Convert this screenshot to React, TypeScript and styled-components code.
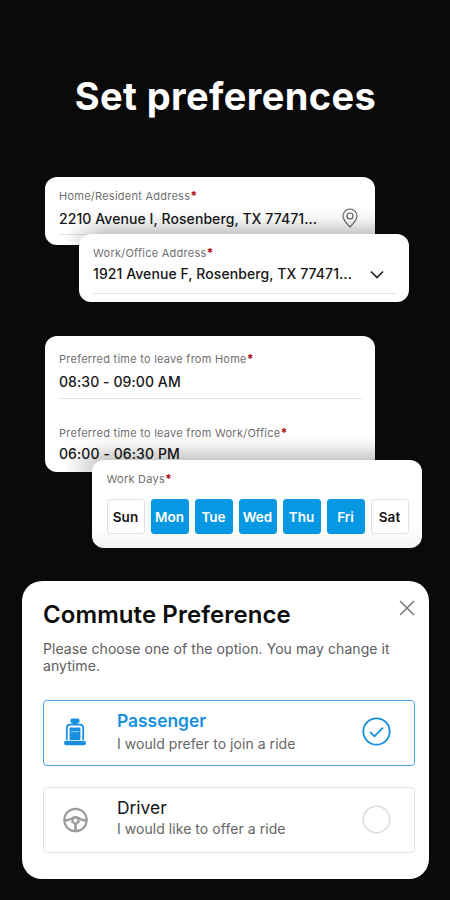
import React from 'react';
import styled, { createGlobalStyle } from 'styled-components';

const GlobalStyle = createGlobalStyle`
  *, *::before, *::after { box-sizing: border-box; }
  body {
    margin: 0;
    background: #0a0a0a;
    font-family: Inter, "Liberation Sans", sans-serif;
  }
`;

const Page = styled.main`
  width: 450px;
  height: 900px;
  overflow: hidden;
  display: flex;
  flex-direction: column;
  align-items: flex-start;
  background: #0a0a0a;
`;

const Heading = styled.h1`
  margin: 71px 0 0;
  width: 100%;
  padding-left: 1px;
  text-align: center;
  color: #fff;
  font-size: 38px;
  font-weight: 700;
  line-height: 50px;
  letter-spacing: 0.4px;
  white-space: nowrap;
`;

const Card = styled.section<{ $left: number; $top: number; $height: number }>`
  position: relative;
  flex: none;
  width: 330px;
  height: ${(p) => p.$height}px;
  margin: ${(p) => p.$top}px 0 0 ${(p) => p.$left}px;
  border-radius: 12px;
  background: #fff;
  overflow: hidden;
`;

const Stack = styled.div<{ $top: number }>`
  margin-top: ${(p) => p.$top}px;
  display: flex;
  flex-direction: column;
  align-items: flex-start;
`;

const Shade = styled.div<{ $height: number }>`
  position: absolute;
  left: 20px;
  right: 0;
  bottom: 0;
  height: ${(p) => p.$height}px;
  background: linear-gradient(rgba(0, 0, 0, 0), rgba(0, 0, 0, 0.05) 30%, rgba(0, 0, 0, 0.22) 70%);
  mask-image: linear-gradient(90deg, transparent, #000 40px);
`;

const Field = styled.div<{ $top: number; $gap: number; $line: number }>`
  margin: 0 13px 0 14px;
  padding-top: ${(p) => p.$top}px;
  padding-bottom: ${(p) => p.$line}px;
  border-bottom: 1px solid #e4e4e4;
  display: flex;
  flex-direction: column;
  gap: ${(p) => p.$gap}px;
`;

const Label = styled.span`
  color: #6f6f6f;
  font-size: 11px;
  line-height: 14px;
  letter-spacing: 0.25px;
  white-space: nowrap;

  &::after {
    content: '*';
    color: #b3161c;
    font-size: 12px;
    line-height: 1;
    font-weight: 800;
  }
`;

const ValueRow = styled.div`
  display: flex;
  align-items: center;
  justify-content: space-between;
  height: 20px;
`;

const Value = styled.span`
  color: #161616;
  font-size: 14px;
  font-weight: 500;
  line-height: 20px;
  letter-spacing: 0.08px;
  white-space: nowrap;
`;

const PinIcon = styled.svg`
  width: 16px;
  height: 20px;
  margin: -2px 4px 0 0;
`;

const ChevronIcon = styled.svg`
  width: 14px;
  height: 9px;
  margin-right: 12px;
`;

const DaysBody = styled.div`
  padding: 12px 13px 0 14.5px;
  height: 100%;
  background: linear-gradient(#fff 75%, #f3f3f3);
  display: flex;
  flex-direction: column;
`;

const Days = styled.div`
  display: flex;
  gap: 6px;
  margin-top: 13px;
`;

const Day = styled.button<{ $on?: boolean }>`
  flex: none;
  width: 38px;
  height: 35px;
  padding: 1px 0 0;
  border: 1px solid ${(p) => (p.$on ? '#0798e4' : '#e0e1ea')};
  border-radius: 3px;
  background: ${(p) => (p.$on ? '#0798e4' : '#fff')};
  color: ${(p) => (p.$on ? '#fff' : '#161616')};
  font: 600 13.5px/32px Inter, sans-serif;
`;

const Sheet = styled.section`
  flex: none;
  width: 407px;
  height: 298px;
  margin: 32.5px 0 0 22px;
  padding: 20px 14px 0 21px;
  border-radius: 20px;
  background: #fff;
`;

const SheetHead = styled.header`
  display: flex;
  justify-content: space-between;
  align-items: flex-start;
`;

const SheetTitle = styled.h2`
  margin: 0;
  color: #0d0d0d;
  font-size: 24px;
  font-weight: 600;
  line-height: 28px;
  letter-spacing: 0.08px;
  white-space: nowrap;
`;

const CloseIcon = styled.svg`
  width: 16px;
  height: 16px;
  margin-top: -1px;
`;

const Description = styled.p`
  margin: 11.5px 0 0;
  color: #5d5d5d;
  font-size: 14px;
  line-height: 17px;
  letter-spacing: 0.07px;
  white-space: nowrap;
`;

const Option = styled.div<{ $on?: boolean; $top: number }>`
  display: flex;
  align-items: center;
  width: 372px;
  height: 66px;
  margin-top: ${(p) => p.$top}px;
  padding: 0 23px ${(p) => (p.$on ? 3 : 0)}px 18px;
  border: 1px solid ${(p) => (p.$on ? '#4ba3e4' : '#e3e3e3')};
  border-radius: 4px;
`;

const OptionIcon = styled.svg`
  flex: none;
  width: 26px;
  height: 28px;
`;

const OptionText = styled.div<{ $on?: boolean }>`
  flex: 1;
  margin-left: 29px;
  padding: ${(p) => (p.$on ? '1px 0 0' : '0 0 2px')};
  display: flex;
  flex-direction: column;
  gap: ${(p) => (p.$on ? 3 : 1)}px;
`;

const OptionTitle = styled.span<{ $on?: boolean }>`
  color: ${(p) => (p.$on ? '#168fdf' : '#161616')};
  font-size: 17.4px;
  font-weight: ${(p) => (p.$on ? 600 : 400)};
  line-height: 20px;
`;

const OptionNote = styled.span`
  color: #666;
  font-size: 14px;
  line-height: 20px;
  letter-spacing: 0.05px;
  white-space: nowrap;
`;

const Radio = styled.svg`
  flex: none;
  width: 29px;
  height: 29px;
`;

const week = ['Sun', 'Mon', 'Tue', 'Wed', 'Thu', 'Fri', 'Sat'];

export default function App() {
  return (
    <>
      <GlobalStyle />
      <Page>
        <Heading>Set preferences</Heading>

        <Stack $top={56}>
          <Card $left={45} $top={0} $height={68}>
            <Shade $height={36} />
            <Field $top={12} $gap={6} $line={5}>
              <Label>Home/Resident Address</Label>
              <ValueRow>
                <Value>2210 Avenue I, Rosenberg, TX 77471...</Value>
                <PinIcon viewBox="0 0 16 20" fill="none" stroke="#5a5a5a" strokeWidth="1.1">
                  <path d="M8 19C5.5 16.3 1 12.2 1 8a7 7 0 0 1 14 0c0 4.2-4.5 8.3-7 11z" />
                  <circle cx="8" cy="8" r="3" />
                </PinIcon>
              </ValueRow>
            </Field>
          </Card>
          <Card $left={79} $top={-11} $height={68}>
            <Field $top={12} $gap={4} $line={9}>
              <Label>Work/Office Address</Label>
              <ValueRow>
                <Value>1921 Avenue F, Rosenberg, TX 77471...</Value>
                <ChevronIcon viewBox="0 0 14 9" fill="none" stroke="#222" strokeWidth="1.7">
                  <path d="M1 1.5l6 6 6-6" />
                </ChevronIcon>
              </ValueRow>
            </Field>
          </Card>
        </Stack>

        <Stack $top={34}>
          <Card $left={45} $top={0} $height={136}>
            <Shade $height={38} />
            <Field $top={16} $gap={6} $line={6}>
              <Label>Preferred time to leave from Home</Label>
              <Value>08:30 - 09:00 AM</Value>
            </Field>
            <Field $top={27} $gap={4} $line={9}>
              <Label>Preferred time to leave from Work/Office</Label>
              <Value>06:00 - 06:30 PM</Value>
            </Field>
          </Card>
          <Card $left={92} $top={-12} $height={88}>
            <DaysBody>
              <Label>Work Days</Label>
              <Days>
                {week.map((d, i) => (
                  <Day key={d} $on={i > 0 && i < 6}>
                    {d}
                  </Day>
                ))}
              </Days>
            </DaysBody>
          </Card>
        </Stack>

        <Sheet>
          <SheetHead>
            <SheetTitle>Commute Preference</SheetTitle>
            <CloseIcon viewBox="0 0 16 16" fill="none" stroke="#777" strokeWidth="1.5">
              <path d="M1 1l14 14M15 1L1 15" />
            </CloseIcon>
          </SheetHead>
          <Description>
            Please choose one of the option. You may change it
            <br />
            anytime.
          </Description>

          <Option $on $top={26}>
            <OptionIcon viewBox="0 0 26 28">
              <rect x="8.5" y="0.5" width="9" height="4.5" rx="1.5" fill="#168fdf" />
              <rect x="10.5" y="4" width="5" height="3" fill="#168fdf" />
              <path d="M4.8 22V10q0-3.4 3.4-3.4h9.6q3.4 0 3.4 3.4v12" fill="none" stroke="#168fdf" strokeWidth="1.8" />
              <rect x="7.6" y="9.6" width="10.8" height="12.4" rx="1" fill="#168fdf" />
              <path d="M9 13.6h8" stroke="#8cc9f1" strokeWidth="1.1" />
              <rect x="2" y="22.8" width="22" height="4.4" rx="2.2" fill="#168fdf" />
            </OptionIcon>
            <OptionText $on>
              <OptionTitle $on>Passenger</OptionTitle>
              <OptionNote>I would prefer to join a ride</OptionNote>
            </OptionText>
            <Radio viewBox="0 0 29 29" fill="none" stroke="#168fdf" strokeWidth="1.8">
              <circle cx="14.5" cy="14.5" r="13.2" />
              <path d="M8 15l4.5 4.3 8.5-8.6" />
            </Radio>
          </Option>

          <Option $top={20.5}>
            <OptionIcon viewBox="0 0 26 28" fill="none" stroke="#9c9c9c">
              <circle cx="13.5" cy="14" r="11.2" strokeWidth="2.2" />
              <path d="M3 14.4c3.5 0 5-.4 7-1.9q3.5-2.2 7 0c2 1.5 3.5 1.9 7 1.9" strokeWidth="2.6" />
              <path d="M9 15.5q3.500 1 4.500 4q1-3 4.500-4" strokeWidth="1.600" />
              <path d="M13.5 17v8" strokeWidth="2.6" />
              <circle cx="13.5" cy="14.5" r="2.7" strokeWidth="1.6" fill="#fff" />
            </OptionIcon>
            <OptionText>
              <OptionTitle>Driver</OptionTitle>
              <OptionNote>I would like to offer a ride</OptionNote>
            </OptionText>
            <Radio viewBox="0 0 29 29" fill="none" stroke="#dedede" strokeWidth="1.6">
              <circle cx="14.5" cy="14.5" r="13.2" />
            </Radio>
          </Option>
        </Sheet>
      </Page>
    </>
  );
}
